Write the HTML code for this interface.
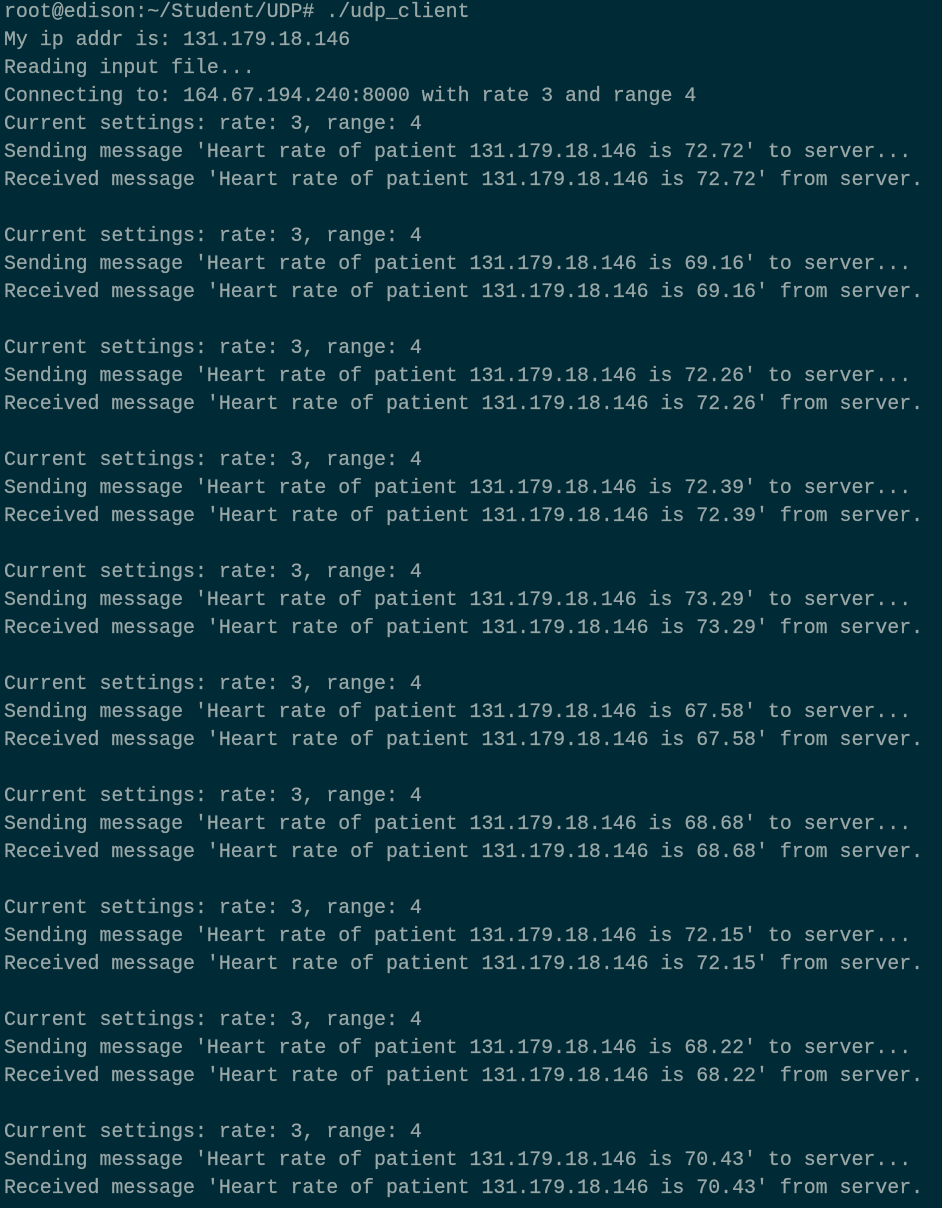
<!DOCTYPE html>
<html><head><meta charset="utf-8"><style>
html,body{margin:0;padding:0;background:#002b36;width:942px;height:1208px;overflow:hidden}
pre{margin:0;position:absolute;left:4px;top:-2px;font-family:"Liberation Mono",monospace;font-size:19.9px;line-height:28px;color:#9aa7a7;white-space:pre;-webkit-text-stroke:0.25px #9aa7a7}
</style></head><body><pre>root@edison:~/Student/UDP# ./udp_client
My ip addr is: 131.179.18.146
Reading input file...
Connecting to: 164.67.194.240:8000 with rate 3 and range 4
Current settings: rate: 3, range: 4
Sending message 'Heart rate of patient 131.179.18.146 is 72.72' to server...
Received message 'Heart rate of patient 131.179.18.146 is 72.72' from server.

Current settings: rate: 3, range: 4
Sending message 'Heart rate of patient 131.179.18.146 is 69.16' to server...
Received message 'Heart rate of patient 131.179.18.146 is 69.16' from server.

Current settings: rate: 3, range: 4
Sending message 'Heart rate of patient 131.179.18.146 is 72.26' to server...
Received message 'Heart rate of patient 131.179.18.146 is 72.26' from server.

Current settings: rate: 3, range: 4
Sending message 'Heart rate of patient 131.179.18.146 is 72.39' to server...
Received message 'Heart rate of patient 131.179.18.146 is 72.39' from server.

Current settings: rate: 3, range: 4
Sending message 'Heart rate of patient 131.179.18.146 is 73.29' to server...
Received message 'Heart rate of patient 131.179.18.146 is 73.29' from server.

Current settings: rate: 3, range: 4
Sending message 'Heart rate of patient 131.179.18.146 is 67.58' to server...
Received message 'Heart rate of patient 131.179.18.146 is 67.58' from server.

Current settings: rate: 3, range: 4
Sending message 'Heart rate of patient 131.179.18.146 is 68.68' to server...
Received message 'Heart rate of patient 131.179.18.146 is 68.68' from server.

Current settings: rate: 3, range: 4
Sending message 'Heart rate of patient 131.179.18.146 is 72.15' to server...
Received message 'Heart rate of patient 131.179.18.146 is 72.15' from server.

Current settings: rate: 3, range: 4
Sending message 'Heart rate of patient 131.179.18.146 is 68.22' to server...
Received message 'Heart rate of patient 131.179.18.146 is 68.22' from server.

Current settings: rate: 3, range: 4
Sending message 'Heart rate of patient 131.179.18.146 is 70.43' to server...
Received message 'Heart rate of patient 131.179.18.146 is 70.43' from server.</pre></body></html>
